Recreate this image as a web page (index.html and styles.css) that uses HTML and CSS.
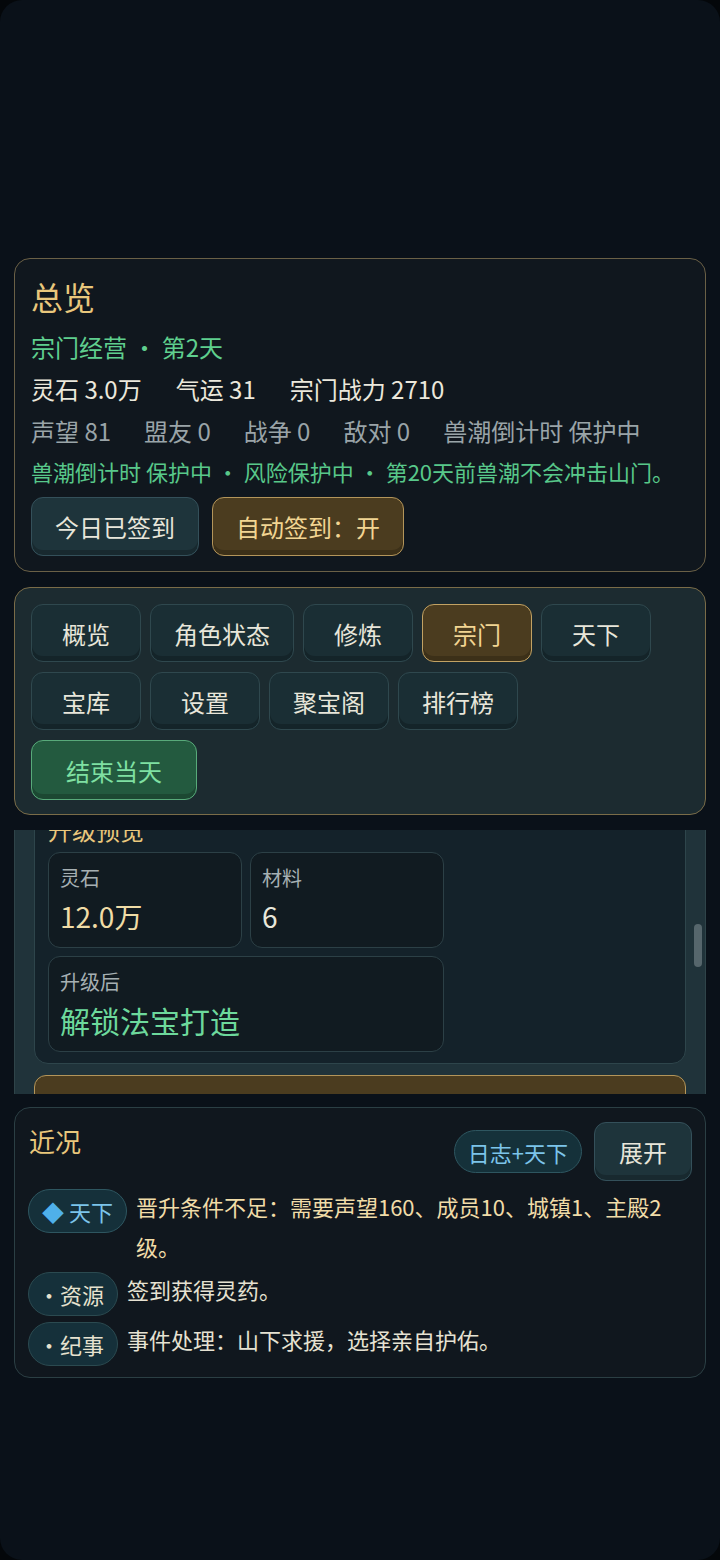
FILE: index.html
```html
<!DOCTYPE html>
<html lang="zh-CN">
<head>
  <meta charset="UTF-8" />
  <meta name="viewport" content="width=device-width, initial-scale=1.0"/>
  <title>宗门经营</title>
  <link rel="stylesheet" href="styles.css">
</head>
<body>
  <div class="screen">

    <!-- Overview -->
    <section class="card card-overview">
      <h1 class="card-title">总览</h1>
      <p class="line line-green">宗门经营 · 第2天</p>
      <div class="stats stats-main">
        <span>灵石 3.0万</span>
        <span>气运 31</span>
        <span>宗门战力 2710</span>
      </div>
      <div class="stats stats-sub">
        <span>声望 81</span>
        <span>盟友 0</span>
        <span>战争 0</span>
        <span>敌对 0</span>
        <span>兽潮倒计时 保护中</span>
      </div>
      <p class="line line-note">兽潮倒计时 保护中 · 风险保护中 · 第20天前兽潮不会冲击山门。</p>
      <div class="btn-row">
        <button class="btn">今日已签到</button>
        <button class="btn btn-gold">自动签到：开</button>
      </div>
    </section>

    <!-- Navigation -->
    <nav class="card card-nav">
      <div class="nav-grid">
        <button class="btn nav-btn">概览</button>
        <button class="btn nav-btn">角色状态</button>
        <button class="btn nav-btn">修炼</button>
        <button class="btn nav-btn btn-gold">宗门</button>
        <button class="btn nav-btn">天下</button>
        <button class="btn nav-btn">宝库</button>
        <button class="btn nav-btn">设置</button>
        <button class="btn nav-btn">聚宝阁</button>
        <button class="btn nav-btn">排行榜</button>
      </div>
      <button class="btn btn-green">结束当天</button>
    </nav>

    <!-- Scrolled sect panel -->
    <div class="pane">
      <div class="pane-body">
        <div class="preview">
          <h3 class="preview-title">升级预览</h3>
          <div class="cost-grid">
            <div class="cost">
              <div class="cost-label">灵石</div>
              <div class="cost-value value-gold">12.0万</div>
            </div>
            <div class="cost">
              <div class="cost-label">材料</div>
              <div class="cost-value">6</div>
            </div>
            <div class="cost cost-wide">
              <div class="cost-label">升级后</div>
              <div class="cost-value value-green">解锁法宝打造</div>
            </div>
          </div>
        </div>
        <button class="btn btn-gold btn-block">升级护山大阵</button>
      </div>
      <div class="scroll-thumb"></div>
    </div>

    <!-- Recent -->
    <section class="card card-recent">
      <div class="recent-head">
        <h2 class="recent-title">近况</h2>
        <div class="recent-actions">
          <span class="pill">日志+天下</span>
          <button class="btn btn-small">展开</button>
        </div>
      </div>
      <div class="log">
        <div class="log-row">
          <span class="tag tag-blue"><span class="tag-icon">◆</span>&nbsp;天下</span>
          <p class="log-text log-warn">晋升条件不足：需要声望160、成员10、城镇1、主殿2级。</p>
        </div>
        <div class="log-row">
          <span class="tag tag-dot">·资源</span>
          <p class="log-text">签到获得灵药。</p>
        </div>
        <div class="log-row">
          <span class="tag tag-dot">·纪事</span>
          <p class="log-text">事件处理：山下求援，选择亲自护佑。</p>
        </div>
      </div>
    </section>

  </div>
</body>
</html>
```

FILE: styles.css
```css
html,
body {
  margin: 0;
  padding: 0;
  background: #04070a;
}

.screen {
  width: 720px;
  min-height: 1560px;
  box-sizing: border-box;
  padding: 258px 14px 0;
  background: #0a1119;
  border-radius: 22px;
  font-family: "Noto Sans CJK SC", "Noto Sans", sans-serif;
  color: #ebe8dc;
}

p,
h1,
h2,
h3 {
  margin: 0;
  font-weight: normal;
}

/* Cards */
.card {
  border-radius: 16px;
  box-sizing: border-box;
}

.card-overview {
  background: #10171e;
  border: 1px solid #6a6046;
  padding: 15px 16px 15px;
}

.card-title {
  font-size: 32px;
  line-height: 44px;
  color: #e9c77c;
}

.line {
  font-size: 24px;
  line-height: 42px;
}

.line-green {
  margin-top: 8px;
  color: #5fcf8e;
}

.stats {
  display: flex;
  gap: 34px;
  font-size: 24px;
  line-height: 42px;
}

.stats-main {
  color: #ebe8dc;
}

.stats-sub {
  gap: 33px;
  color: #9aa4a8;
}

.line-note {
  font-size: 22px;
  line-height: 38px;
  color: #58c88a;
}

.btn-row {
  display: flex;
  gap: 13px;
  margin-top: 7px;
}

/* Buttons */
.btn {
  font-family: inherit;
  font-size: 24px;
  height: 59px;
  padding: 0 23px;
  border-radius: 12px;
  border: 1px solid #34505a;
  background: #1e343b;
  color: #e8e6da;
  box-shadow: inset 0 -5px 0 rgba(0, 0, 0, 0.2);
  box-sizing: border-box;
  cursor: pointer;
}

.btn-gold {
  background: #4b3c1f;
  border-color: #b3955a;
  color: #f2d592;
}

.card-nav {
  margin-top: 15px;
  background: #1c2b30;
  border: 1px solid #7a6c48;
  padding: 16px 16px 14px;
}

.nav-grid {
  display: flex;
  flex-wrap: wrap;
  gap: 10px 9px;
}

.nav-btn {
  height: 58px;
  min-width: 110px;
  background: #1a2e34;
  border-color: #2f484e;
}

.nav-btn.btn-gold {
  background: #4b3c1f;
  border-color: #c2a263;
}

.btn-green {
  margin-top: 10px;
  height: 60px;
  padding: 0 34px;
  background: #235a3f;
  border-color: #58aa7a;
  color: #7fe0a2;
}

/* Scrolled panel */
.pane {
  position: relative;
  height: 264px;
  overflow: hidden;
  margin-top: 15px;
  background: #20333a;
  border-left: 1px solid #2f4449;
  border-right: 1px solid #2f4449;
}

.pane-body {
  margin-top: -31px;
  padding: 0 19px;
}

.preview {
  border: 1px solid #2e454b;
  border-radius: 14px;
  background: #14222a;
  padding: 14px 13px 11px;
}

.preview-title {
  font-size: 24px;
  line-height: 32px;
  color: #e9c77c;
}

.cost-grid {
  display: grid;
  grid-template-columns: 194px 194px;
  gap: 8px;
  margin-top: 6px;
}

.cost {
  border: 1px solid #2c4046;
  border-radius: 12px;
  background: #111b21;
  padding: 11px;
}

.cost-wide {
  grid-column: span 2;
}

.cost-label {
  font-size: 20px;
  line-height: 28px;
  color: #a6b0b3;
  margin-bottom: 4px;
}

.cost-value {
  font-size: 28px;
  line-height: 40px;
  color: #e8e6da;
}

.value-gold {
  color: #f0dca6;
}

.value-green {
  font-size: 30px;
  color: #6dd99c;
}

.btn-block {
  display: block;
  width: 100%;
  height: 58px;
  margin-top: 11px;
}

.scroll-thumb {
  position: absolute;
  right: 3px;
  top: 94px;
  width: 8px;
  height: 43px;
  border-radius: 4px;
  background: #56666c;
}

/* Recent */
.card-recent {
  margin-top: 13px;
  background: #10171e;
  border: 1px solid #2b3f44;
  padding: 14px 13px 11px;
}

.recent-head {
  display: flex;
  justify-content: space-between;
  align-items: flex-start;
}

.recent-title {
  font-size: 26px;
  line-height: 38px;
  color: #e9c77c;
  padding-left: 1px;
}

.recent-actions {
  display: flex;
  align-items: center;
  gap: 12px;
}

.pill {
  display: inline-flex;
  align-items: center;
  height: 43px;
  padding: 0 13px;
  border-radius: 22px;
  border: 1px solid #2e5660;
  background: #15313a;
  color: #7cc4ea;
  font-size: 22px;
  box-sizing: border-box;
}

.btn-small {
  padding: 0 24px;
}

.log {
  display: flex;
  flex-direction: column;
  gap: 6px;
  margin-top: 8px;
}

.log-row {
  display: flex;
  align-items: flex-start;
  gap: 9px;
}

.tag {
  flex-shrink: 0;
  display: inline-flex;
  align-items: center;
  height: 44px;
  padding: 0 13px;
  border-radius: 22px;
  border: 1px solid #2b4a50;
  background: #15303a;
  color: #e6e2cf;
  font-size: 22px;
  box-sizing: border-box;
}

.tag-dot {
  padding: 0 13px 0 9px;
}

.tag-blue {
  color: #7cc4ea;
  border-color: #2e5660;
}

.tag-icon {
  color: #4fb0ea;
}

.log-text {
  font-size: 22px;
  line-height: 40px;
  margin-top: -3px;
  color: #e6e2d2;
}

.log-warn {
  color: #f0dca8;
}
```
